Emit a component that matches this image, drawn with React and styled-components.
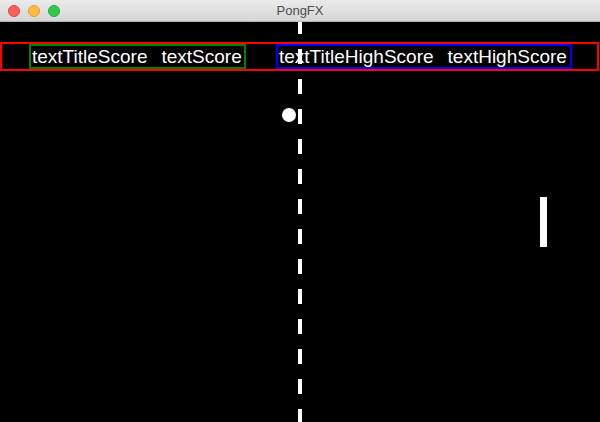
import React from 'react';
import styled, { createGlobalStyle } from 'styled-components';

const GlobalStyle = createGlobalStyle`
  html, body {
    margin: 0;
    padding: 0;
    background: #000;
  }
`;

const Window = styled.div`
  width: 600px;
  height: 422px;
  display: flex;
  flex-direction: column;
  overflow: hidden;
  font-family: "Liberation Sans", Arial, sans-serif;
`;

const TitleBar = styled.div`
  position: relative;
  height: 22px;
  box-sizing: border-box;
  flex: none;
  display: flex;
  align-items: center;
  padding-left: 8px;
  gap: 8px;
  background: linear-gradient(#ebebeb, #d5d5d5);
  border-bottom: 1px solid #b4b4b4;
`;

const Light = styled.span`
  width: 12px;
  height: 12px;
  box-sizing: border-box;
  border-radius: 50%;
  background: ${({ color }) => color};
  border: 0.5px solid ${({ edge }) => edge};
`;

const Title = styled.div`
  position: absolute;
  left: 0;
  right: 0;
  top: 0;
  line-height: 22px;
  text-align: center;
  font-size: 13px;
  color: #4d4d4d;
  pointer-events: none;
`;

const Canvas = styled.div`
  position: relative;
  flex: 1;
  background: #000;
  padding-top: 20px;
`;

const Hud = styled.div`
  width: 599px;
  height: 29px;
  box-sizing: border-box;
  border: 2px solid #ff0000;
  display: flex;
  align-items: center;
  padding-left: 27px;
  gap: 30px;
`;

const ScoreGroup = styled.div`
  box-sizing: border-box;
  height: 25px;
  width: ${({ w }) => w}px;
  border: 2px solid ${({ color }) => color};
  display: flex;
  align-items: center;
  padding-left: 1px;
  gap: 14px;
`;

const Label = styled.span`
  color: #fff;
  font-size: 19px;
  line-height: 21px;
  white-space: nowrap;
`;

const Court = styled.svg`
  position: absolute;
  left: 0;
  top: 0;
  width: 600px;
  height: 400px;
`;

export default function App() {
  return (
    <>
      <GlobalStyle />
      <Window>
        <TitleBar>
          <Light color="#fc605c" edge="#de4643" />
          <Light color="#fdbc40" edge="#de9f34" />
          <Light color="#34c84a" edge="#27aa35" />
          <Title>PongFX</Title>
        </TitleBar>
        <Canvas>
          <Hud>
            <ScoreGroup color="#008000" w={217}>
              <Label>textTitleScore</Label>
              <Label>textScore</Label>
            </ScoreGroup>
            <ScoreGroup color="#0000ff" w={296}>
              <Label>textTitleHighScore</Label>
              <Label>textHighScore</Label>
            </ScoreGroup>
          </Hud>
          <Court viewBox="0 0 600 400">
            <line x1="300" y1="-3" x2="300" y2="400" stroke="#fff" strokeWidth="4" strokeDasharray="15 15" />
            <circle cx="289" cy="93" r="7" fill="#fff" />
            <rect x="540" y="175" width="7" height="50" fill="#fff" />
          </Court>
        </Canvas>
      </Window>
    </>
  );
}
